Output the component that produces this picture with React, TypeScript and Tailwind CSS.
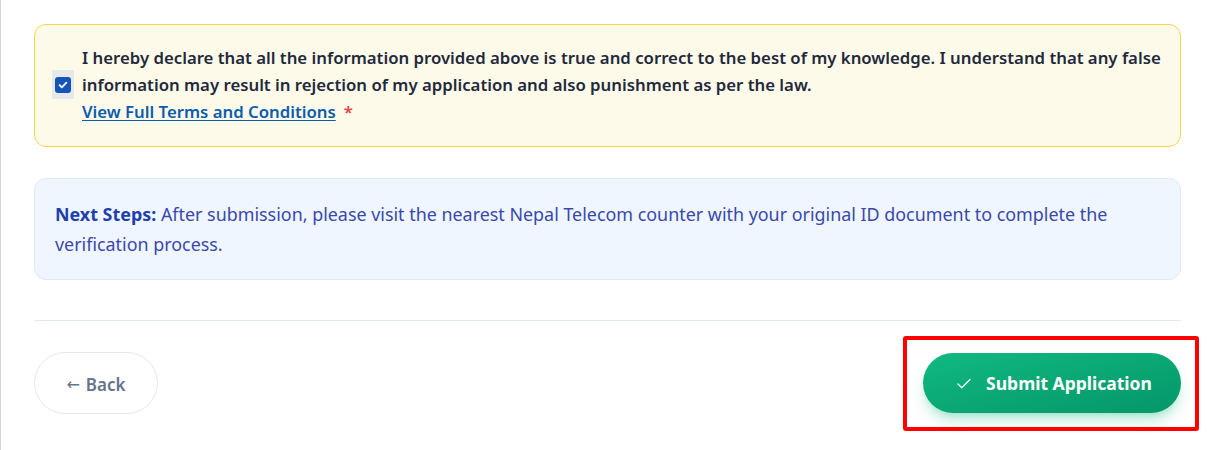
import { Check } from 'lucide-react';

export default function App() {
  return (
    <div
      className="min-h-[450px] w-[1207px] border-l border-[#d4d4d4] bg-white pl-[33px] pr-[26px] pt-6"
      style={{ fontFamily: '"Noto Sans", "Open Sans", Arial, sans-serif' }}
    >
      {/* Declaration */}
      <div className="flex items-center gap-[8px] rounded-xl border border-[#fcd34d] bg-[#fefae9] pb-[21px] pt-[19px] pl-[17px] pr-4">
        <label className="flex h-[29px] w-[22px] shrink-0 items-center justify-center bg-[#e6e9e9]">
          <span className="flex h-4 w-4 items-center justify-center rounded-[3px] bg-[#1553b6]">
            <svg viewBox="0 0 16 16" className="h-3 w-3" fill="none" stroke="white" strokeWidth="2.4" strokeLinecap="round" strokeLinejoin="round">
              <path d="M3.5 8.2l3 3 6-6.4" />
            </svg>
          </span>
        </label>
        <div className="text-[16.75px] font-semibold leading-[27px] text-[#1e293b]">
          <p>
            I hereby declare that all the information provided above is true and correct to the best of my knowledge. I understand that any false information may result in rejection of my application and also punishment as per the law.
          </p>
          <a href="#" className="text-[#0b5cad] underline underline-offset-2">
            View Full Terms and Conditions
          </a>
          <span className="ml-2 text-[#ef4444]">*</span>
        </div>
      </div>

      {/* Next steps */}
      <p className="mt-[31px] rounded-xl border border-[#dbeafe] bg-[#eff6ff] pl-5 pr-16 pb-5 pt-5 text-[17.9px] leading-[30px] text-[#3949ab]">
        <b className="font-bold text-[#1e40af]">Next Steps:</b> After submission, please visit the nearest Nepal Telecom counter with your original ID document to complete the verification process.
      </p>

      <hr className="mt-[40px] border-t border-[#e2e8f0]" />

      {/* Actions */}
      <div className="mt-[31px] flex items-center justify-between">
        <button
          type="button"
          className="flex h-[62px] w-[124px] items-center justify-center gap-[6px] rounded-full border border-[#e5e7eb] bg-white pt-[3px] text-[17px] font-semibold text-[#64748b]"
        >
          <span className="font-['DejaVu_Sans'] text-[16px] font-normal">←</span>
          Back
        </button>
        <div className="relative">
          <button
            type="button"
            className="flex h-[60px] w-[258px] items-center justify-center gap-[13px] rounded-full bg-gradient-to-br from-[#10b981] to-[#059669] pl-[3px] pt-[1px] text-[17.5px] font-bold text-white shadow-lg shadow-[#10b981]/30"
          >
            <Check className="h-[18px] w-[18px]" strokeWidth={1.75} />
            Submit Application
          </button>
          <div className="pointer-events-none absolute -left-[20px] -right-[18px] -top-[17px] -bottom-[18px] rounded-[3px] border-4 border-[#ff0000]" />
        </div>
      </div>
    </div>
  );
}
